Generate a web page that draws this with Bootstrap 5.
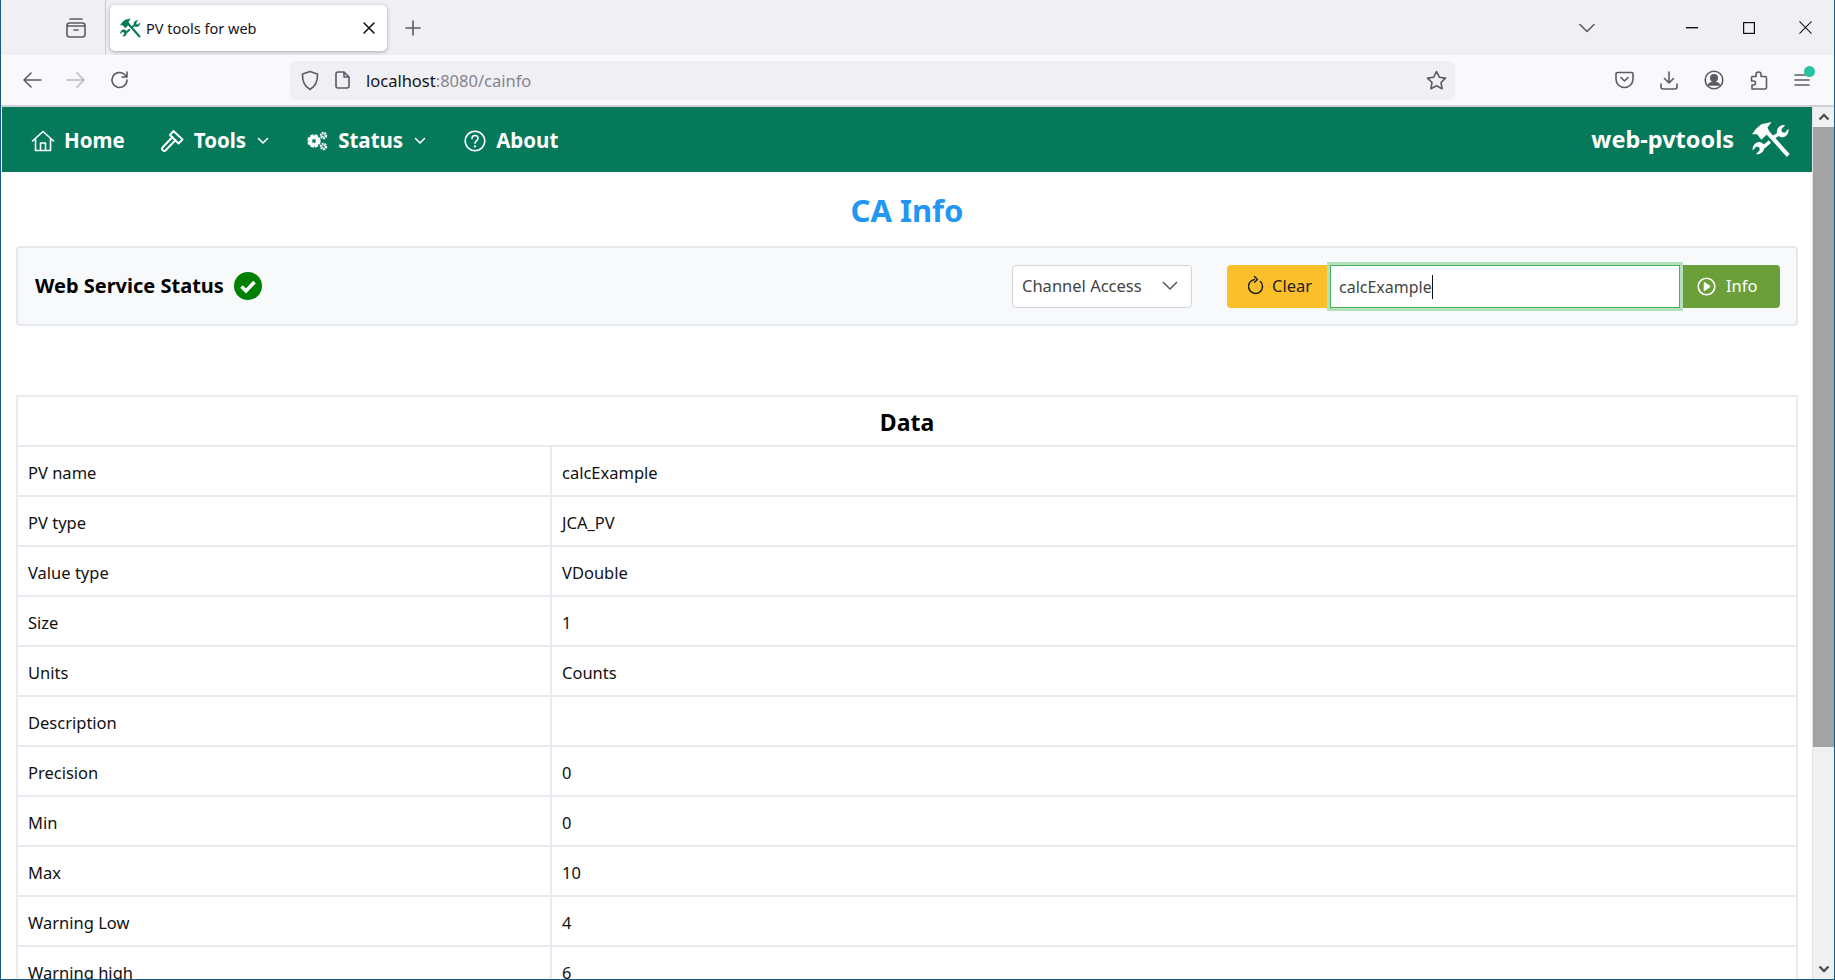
<!DOCTYPE html>
<html lang="en">
<head>
  <meta charset="UTF-8" />
  <title>PV tools for web</title>
  <meta name="viewport" content="width=device-width, initial-scale=1" />
  <link href="https://cdn.jsdelivr.net/npm/bootstrap@5.3.3/dist/css/bootstrap.min.css" rel="stylesheet" />
  <style>
    html, body { height: 100%; overflow: hidden; }
    body {
      font-family: "Noto Sans", "Open Sans", sans-serif;
      font-size: 16.5px;
      color: #111;
      background: #fff;
    }
    .win-frame { height: 980px; border: solid #1b5a82; border-width: 0 1px 1px 1px; display: flex; flex-direction: column; }
    svg { display: block; flex: none; }
    .line-ic { fill: none; stroke: currentColor; stroke-width: 1.6; stroke-linecap: round; stroke-linejoin: round; }

    /* browser chrome */
    .tab-strip { height: 55px; background: #f0f0f4; color: #5b5b66; padding-left: 64px; }
    .tab-sep { width: 1px; height: 55px; background: #c9c9cf; margin-left: 18px; }
    .tab-item {
      width: 277px; height: 46px; margin-left: 4px; margin-top: 1px; background: #fff; border-radius: 5px;
      box-shadow: 0 1px 4px rgba(0,0,0,.3); padding: 0 11px 0 10px; color: #15141a; font-size: 14.5px;
    }
    .tab-title { margin-left: 5px; padding-top: 1px; }
    .tab-plus { margin-left: 18px; }
    .win-chevron { margin-left: auto; margin-right: 91px; }
    .win-gap { margin-right: 45px; }
    .tool-row { height: 50px; background: #f9f9fb; color: #5b5b66; padding-left: 21px; }
    .url-box {
      width: 1165px; height: 39px; margin-left: 160px; margin-right: 160px; background: #f0f0f4; border-radius: 6px;
      padding: 0 8px 0 11px; font-size: 16.5px;
    }
    .url-host { color: #15141a; margin-left: 16px; padding-top: 3px; }
    .url-rest { color: #85858f; }
    .tool-gap { gap: 26px; }
    .menu-dot { width: 11px; height: 11px; border-radius: 50%; background: #2ac3a2; position: absolute; top: -7px; right: -5px; }
    .chrome-line { height: 2px; background: #cfcfd8; }

    /* app */
    .page-wrap { flex: 1; min-height: 0; display: flex; }
    .page-main { flex: 1; min-width: 0; overflow: hidden; margin-left: 1px; }
    .scroll-rail { width: 22px; background: #f0f0f0; border-left: 1px solid #e3e3e3; color: #505050; }
    .scroll-btn { height: 20px; }
    .scroll-thumb { height: 620px; background: #a3a3a3; }

    .app-bar { height: 65px; background: #06795a; padding: 0 22px 0 29px; --bs-navbar-nav-link-padding-x: 0; }
    .app-bar .nav-link { color: #fff; font-weight: 700; font-size: 20.5px; padding: 2px 0 0; display: flex; align-items: center; }
    .app-bar .nav-link svg.lead-ic { margin-right: 10px; }
    .app-bar .nav-link svg.tail-ic { margin-left: 11px; }
    .bar-nav { gap: 38px; }
    .bar-nav .nav-item:first-child { margin-right: -3px; }
    .bar-brand { color: #fff; font-weight: 700; font-size: 23.5px; margin: 0 18px 0 0; padding: 0; }

    .page-title { color: #2196f3; font-size: 31px; font-weight: 700; text-align: center; margin: 16px 0 13px; line-height: 45px; }
    .status-panel {
      height: 80px; margin: 0 14px 69px 14px; background: #f8f9fa; border: 2px solid #e4e7ec; border-radius: 4px;
      padding: 0 12px 0 17px;
    }
    .status-label { font-weight: 700; font-size: 20px; color: #000; margin-right: 10px; }
    .source-select {
      width: 180px; height: 43px; font-size: 16.5px; color: #444; margin-right: 35px; padding: 0 9px;
      border-color: #ced4da; border-radius: 4px; background-size: 18px 12px; background-position: right 12px center;
      background-image: url("data:image/svg+xml,%3csvg xmlns='http://www.w3.org/2000/svg' viewBox='0 0 18 12'%3e%3cpath fill='none' stroke='%23555' stroke-width='1.500' d='M2 2l7 7 7-7'/%3e%3c/svg%3e");
    }
    .pv-group { width: 557px; flex: none; }
    .pv-group .btn { font-size: 16.5px; display: flex; align-items: center; gap: 8px; border: 0; border-radius: 4px; height: 43px; color: #222; }
    .btn-clear { width: 104px; background: #fbbf2c; padding: 0 14px 0 21px; border-top-right-radius: 0 !important; border-bottom-right-radius: 0 !important; }
    .btn-info-go { width: 101px; background: #6a9f3a; color: #fff !important; padding: 0 21px 0 18px; margin-left: 2px; border-top-left-radius: 0 !important; border-bottom-left-radius: 0 !important; gap: 10px !important; }
    .pv-group > .pv-input {
      width: 350px; flex: none; height: 43px; font-size: 16px; color: #444; padding: 2px 8px 0; border: 1px solid #45b35c;
      border-radius: 0; box-shadow: 0 0 0 3px #b3dfb9; position: relative; z-index: 5; display: flex; align-items: center;
    }
    .text-caret { display: block; width: 1px; height: 24px; background: #111; }

    .data-table { margin: 0 14px 0 14px; width: calc(100% - 28px); border-collapse: collapse; table-layout: fixed; }
    .data-table th, .data-table td {
      border: 2px solid #e9e9ef; height: 50px; padding: 3px 10px 0; font-size: 16.5px; color: #111; vertical-align: middle; line-height: 1.4;
    }
    .data-table th { font-size: 23px; font-weight: 700; text-align: center; color: #000; }
    .col-key { width: 534px; }
  </style>
</head>
<body>
  <svg width="0" height="0" style="display:none">
    <symbol id="tools-ic" viewBox="0 0 24 24">
      <g transform="scale(1.03 1.1)">
        <path d="M0 7.600 2.500 4.400 5.700 1.900 12 .6 9.500 3.800 10.700 6.300 5.700 10.700 3.200 7.600z" fill="currentColor"/>
        <path d="M9 6 22.200 19.800" stroke="currentColor" stroke-width="2.400" fill="none"/>
        <path d="M12.500 9.800 16.500 7.500M11 11.800l-4 3.200" stroke="currentColor" stroke-width="2" fill="none"/>
        <path d="M15.500 8c-1-2.800.8-5.600 3.800-5.700l1 .1-2.300 2.300.4 1.700 1.700.4 2.300-2.300c.4 3.200-2.400 5.500-5 4.700z" fill="currentColor"/>
        <path d="M7.300 13.400c1 2.800-.8 5.600-3.800 5.700l-1-.1 2.300-2.300-.4-1.700-1.700-.4-2.300 2.300c-.4-3.200 2.400-5.500 5-4.700z" fill="currentColor"/>
      </g>
    </symbol>
  </svg>

  <div class="win-frame">
    <!-- browser tab strip -->
    <div class="tab-strip d-flex align-items-center">
      <svg class="line-ic" width="22" height="22" viewBox="0 0 22 22"><path d="M5 2h12"/><rect x="2" y="6" width="18" height="14" rx="2.5"/><path d="M2 9h18M9 13h4"/></svg>
      <div class="tab-sep"></div>
      <div class="tab-item d-flex align-items-center">
        <svg width="21" height="21" style="color:#06795a"><use href="#tools-ic"/></svg>
        <span class="tab-title">PV tools for web</span>
        <svg class="line-ic ms-auto" style="color:#15141a" width="14" height="14" viewBox="0 0 14 14"><path d="M2 2l10 10M12 2 2 12"/></svg>
      </div>
      <svg class="line-ic tab-plus" width="16" height="16" viewBox="0 0 16 16"><path d="M8 1v14M1 8h14"/></svg>
      <svg class="line-ic win-chevron" width="16" height="10" viewBox="0 0 16 10"><path d="M1 1.500 8 8.500 15 1.500"/></svg>
      <svg class="win-gap" width="12" height="2"><rect width="12" height="1.4" fill="#111"/></svg>
      <svg class="win-gap" style="margin-right:44px" width="12" height="12"><rect x=".6" y=".6" width="10.800" height="10.800" fill="none" stroke="#111" stroke-width="1.2"/></svg>
      <svg style="margin-right:22px" width="13" height="13" viewBox="0 0 14 14"><path d="M.5.5l13 13M13.500.5l-13 13" stroke="#111" stroke-width="1.100"/></svg>
    </div>

    <!-- browser toolbar -->
    <div class="tool-row d-flex align-items-center">
      <svg class="line-ic" width="20" height="18" viewBox="0 0 20 18"><path d="M19 9H2M9 2 2 9l7 7"/></svg>
      <svg class="line-ic ms-4" style="color:#b8b8c0" width="20" height="18" viewBox="0 0 20 18"><path d="M1 9h17M11 2l7 7-7 7"/></svg>
      <svg class="line-ic ms-4" width="20" height="20" viewBox="0 0 20 20"><path d="M17 10a7.500 7.500 0 1 1-2.400-5.500L17 7M17 2v5h-5"/></svg>
      <div class="url-box d-flex align-items-center">
        <svg class="line-ic" width="18" height="21" viewBox="0 0 18 21"><path d="M9 1.500 16.500 4c.3 7-1.500 12-7.500 15.500C3 16 1.200 11 1.500 4z"/></svg>
        <svg class="line-ic ms-3" width="15" height="18" viewBox="0 0 15 18"><path d="M3 1h6l5 5v9a2 2 0 0 1-2 2H3a2 2 0 0 1-2-2V3a2 2 0 0 1 2-2zM9 1v5h5"/></svg>
        <span class="url-host">localhost<span class="url-rest">:8080/cainfo</span></span>
        <svg class="line-ic ms-auto" width="21" height="20" viewBox="0 0 21 20"><path d="m10.500 1.500 2.800 5.700 6.200.9-4.500 4.400 1.100 6.200-5.600-2.900-5.600 2.900 1.100-6.200L1.500 8.100l6.200-.9z"/></svg>
      </div>
      <div class="d-flex align-items-center tool-gap">
        <svg class="line-ic" width="19" height="18" viewBox="0 0 19 18"><path d="M2.500 1.500h14a1.500 1.500 0 0 1 1.500 1.500v5a8.500 8.500 0 0 1-17 0V3a1.500 1.500 0 0 1 1.500-1.500zM6 6.500l3.500 3.500L13 6.500"/></svg>
        <svg class="line-ic" width="18" height="19" viewBox="0 0 18 19"><path d="M9 1v11M4.500 7.500 9 12l4.500-4.500M1 13v3a2 2 0 0 0 2 2h12a2 2 0 0 0 2-2v-3"/></svg>
        <svg class="line-ic" width="20" height="20" viewBox="0 0 20 20"><circle cx="10" cy="10" r="8.800"/><circle cx="10" cy="8" r="3.200" fill="currentColor"/><path d="M4.500 15c2-3.500 9-3.500 11 0z" fill="currentColor"/></svg>
        <svg class="line-ic" width="18" height="20" viewBox="0 0 18 20"><path d="M2.500 6.500H6V4.500a2.500 2.500 0 0 1 5 0v2h4a1.500 1.500 0 0 1 1.500 1.500v9.500a1.500 1.500 0 0 1-1.500 1.500H2v-4h1.500a2 2 0 0 0 0-4H1.500V8a1.500 1.500 0 0 1 1-1.500z"/></svg>
        <div class="position-relative">
          <svg class="line-ic" width="16" height="14" viewBox="0 0 16 14"><path d="M1 2h14M1 7h14M1 12h14"/></svg>
          <span class="menu-dot"></span>
        </div>
      </div>
    </div>
    <div class="chrome-line"></div>

    <div class="page-wrap">
      <div class="page-main">
        <!-- app navbar -->
        <nav class="navbar navbar-expand app-bar">
          <ul class="navbar-nav bar-nav">
            <li class="nav-item">
              <a class="nav-link" href="#">
                <svg class="lead-ic line-ic" style="margin-right:9px" width="24" height="22" viewBox="0 0 24 22"><path d="M1.500 11 12 1.500 22.500 11M4.500 9v11.500h15V9M9.500 20.500V13h5v7.500"/></svg>Home
              </a>
            </li>
            <li class="nav-item">
              <a class="nav-link" href="#">
                <svg class="lead-ic line-ic" width="24" height="24" viewBox="0 0 24 24"><path d="M13.500 2 22.500 10.500 18.500 14.500 10 6zM12.500 8 2.500 18.500c-1.500 1.500 1 4.500 3 3L15.500 11" stroke-width="1.900"/></svg>Tools
                <svg class="tail-ic line-ic" width="12" height="8" viewBox="0 0 12 8"><path d="M1.500 1.500 6 6l4.500-4.500"/></svg>
              </a>
            </li>
            <li class="nav-item">
              <a class="nav-link" href="#">
                <svg class="lead-ic" width="21" height="20" viewBox="0 0 21 20"><circle cx="7" cy="10" r="4.200" fill="none" stroke="#fff" stroke-width="5" stroke-dasharray="2.500 .8"/><circle cx="7" cy="10" r="4" fill="none" stroke="#fff" stroke-width="3"/><circle cx="16.500" cy="4.500" r="2.300" fill="none" stroke="#fff" stroke-width="2.800" stroke-dasharray="1.500 .6"/><circle cx="16.500" cy="15.500" r="2.300" fill="none" stroke="#fff" stroke-width="2.800" stroke-dasharray="1.500 .6"/></svg>Status
                <svg class="tail-ic line-ic" width="12" height="8" viewBox="0 0 12 8"><path d="M1.500 1.500 6 6l4.500-4.500"/></svg>
              </a>
            </li>
            <li class="nav-item">
              <a class="nav-link" href="#">
                <svg class="lead-ic line-ic" width="22" height="22" viewBox="0 0 22 22"><circle cx="11" cy="11" r="9.800"/><path d="M8 8.500C8 6.500 9.500 5.500 11 5.500s3 1 3 2.800c0 2.500-3 2.500-3 5"/><path d="M11 16.300v.2" stroke-width="2.200"/></svg>About
              </a>
            </li>
          </ul>
          <div class="d-flex align-items-center ms-auto">
            <a class="navbar-brand bar-brand" href="#">web-pvtools</a>
            <svg width="38" height="38" style="color:#fff"><use href="#tools-ic"/></svg>
          </div>
        </nav>

        <h1 class="page-title">CA Info</h1>

        <!-- status and search bar -->
        <div class="status-panel d-flex align-items-center">
          <span class="status-label">Web Service Status</span>
          <svg width="28" height="28" viewBox="0 0 28 28"><circle cx="14" cy="14" r="14" fill="#008000"/><path d="M7.500 14.500 12 19l8.500-9" fill="none" stroke="#fff" stroke-width="3.600"/></svg>
          <select class="form-select source-select ms-auto">
            <option>Channel Access</option>
          </select>
          <div class="input-group pv-group">
            <button class="btn btn-clear" type="button">
              <svg class="line-ic" width="16" height="22" viewBox="0 0 16 22"><path d="M12.500 6.500a7 7 0 1 1-6-2M6.500 1.500 9.500 4.500 6.500 7.200" stroke-width="1.500"/></svg>Clear
            </button>
            <div class="form-control pv-input">calcExample<span class="text-caret"></span></div>
            <button class="btn btn-info-go" type="button">
              <svg class="line-ic" width="19" height="19" viewBox="0 0 19 19"><circle cx="9.500" cy="9.500" r="8.300"/><path d="M7.500 5.800 12.500 9.500 7.500 13.200z" fill="#fff"/></svg>Info
            </button>
          </div>
        </div>

        <!-- data table -->
        <table class="data-table">
          <colgroup><col class="col-key" /><col /></colgroup>
          <thead>
            <tr><th colspan="2">Data</th></tr>
          </thead>
          <tbody>
            <tr><td>PV name</td><td>calcExample</td></tr>
            <tr><td>PV type</td><td>JCA_PV</td></tr>
            <tr><td>Value type</td><td>VDouble</td></tr>
            <tr><td>Size</td><td>1</td></tr>
            <tr><td>Units</td><td>Counts</td></tr>
            <tr><td>Description</td><td></td></tr>
            <tr><td>Precision</td><td>0</td></tr>
            <tr><td>Min</td><td>0</td></tr>
            <tr><td>Max</td><td>10</td></tr>
            <tr><td>Warning Low</td><td>4</td></tr>
            <tr><td>Warning high</td><td>6</td></tr>
          </tbody>
        </table>
      </div>

      <!-- page scrollbar -->
      <div class="scroll-rail d-flex flex-column">
        <div class="scroll-btn d-flex align-items-center justify-content-center">
          <svg width="12" height="8" viewBox="0 0 12 8"><path d="M1.500 6.500 6 2l4.500 4.500" fill="none" stroke="currentColor" stroke-width="2.400"/></svg>
        </div>
        <div class="scroll-thumb"></div>
        <div class="scroll-btn d-flex align-items-center justify-content-center mt-auto">
          <svg width="12" height="8" viewBox="0 0 12 8"><path d="M1.500 1.500 6 6l4.500-4.500" fill="none" stroke="currentColor" stroke-width="2.400"/></svg>
        </div>
      </div>
    </div>
  </div>

  <script src="https://cdn.jsdelivr.net/npm/bootstrap@5.3.3/dist/js/bootstrap.bundle.min.js"></script>
</body>
</html>
